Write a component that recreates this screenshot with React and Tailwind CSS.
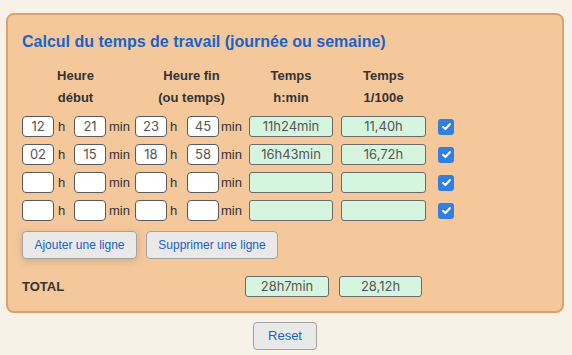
import React from "react";

const rows = [
  ["12", "21", "23", "45", "11h24min", "11,40h"],
  ["02", "15", "18", "58", "16h43min", "16,72h"],
  ["", "", "", "", "", ""],
  ["", "", "", "", "", ""],
];

const inputCls =
  "w-[32px] h-[21px] bg-white border border-[#5a5a5a] rounded-[4px] text-center text-[13px] text-[#555] leading-[19px] font-['Inter',sans-serif]";
const resCls =
  "h-[21px] bg-[#d6f5df] border border-[#6a6a6a] rounded-[3px] text-center text-[13px] text-[#555] leading-[19px] font-['Inter',sans-serif]";

function Check() {
  return (
    <div className="w-[16px] h-[16px] rounded-[3px] bg-[#2f7fe4] flex items-center justify-center">
      <svg width="11" height="11" viewBox="0 0 12 12">
        <path d="M2.2 6.3 L4.8 8.8 L9.8 3.3" stroke="white" strokeWidth="2.2" fill="none" strokeLinecap="round" strokeLinejoin="round" />
      </svg>
    </div>
  );
}

export default function App() {
  return (
    <div className="w-[572px] h-[355px] bg-[#f8f1e7] font-['Liberation_Sans',Arial,sans-serif] pt-[13px] pl-[6px]">
      <div className="w-[558px] h-[300px] bg-[#f5c89c] border-2 border-[#dba26d] rounded-[8px] pl-[14px] pt-[17px]">
        <div className="text-[16px] leading-[20px] font-bold text-[#1565c8]">
          Calcul du temps de travail (journée ou semaine)
        </div>
        <div className="flex mt-[13px] text-[13px] font-bold text-[#333] leading-[22px] text-center">
          <div className="w-[107px]">Heure<br />début</div>
          <div className="w-[113px] ml-[6px]">Heure fin<br />(ou temps)</div>
          <div className="w-[84px] ml-[1px]">Temps<br />h:min</div>
          <div className="w-[85px] ml-[8px]">Temps<br />1/100e</div>
        </div>
        <div className="flex flex-col gap-[7px] mt-[7px]">
          {rows.map((r, i) => (
            <div key={i} className="flex items-center text-[13px] text-[#333]">
              <div className={inputCls}>{r[0]}</div>
              <span className="w-[20px] pl-[4px]">h</span>
              <div className={inputCls}>{r[1]}</div>
              <span className="w-[29px] pl-[3px]">min</span>
              <div className={inputCls}>{r[2]}</div>
              <span className="w-[20px] pl-[3px]">h</span>
              <div className={inputCls}>{r[3]}</div>
              <span className="w-[30px] pl-[2px]">min</span>
              <div className={resCls + " w-[84px]"}>{r[4]}</div>
              <div className={resCls + " w-[85px] ml-[8px]"}>{r[5]}</div>
              <div className="ml-[12px]">
                <Check />
              </div>
            </div>
          ))}
        </div>
        <div className="flex gap-[9px] mt-[10px]">
          <button className="w-[115px] h-[28px] bg-[#e9e9ea] border border-[#a3a3a3] rounded-[4px] text-[12px] text-[#1a62c4] shadow-[0_2px_8px_rgba(0,0,0,0.15)]">
            Ajouter une ligne
          </button>
          <button className="w-[132px] h-[28px] bg-[#e9e9ea] border border-[#a3a3a3] rounded-[4px] text-[12px] text-[#1a62c4]">
            Supprimer une ligne
          </button>
        </div>
        <div className="flex items-center mt-[17px]">
          <div className="w-[223px] text-[13px] font-bold text-[#333]">TOTAL</div>
          <div className={resCls + " w-[84px] h-[20px] leading-[18px]"}>28h7min</div>
          <div className={resCls + " w-[83px] h-[20px] leading-[18px] ml-[10px]"}>28,12h</div>
        </div>
      </div>
      <div className="flex justify-center w-[558px] mt-[9px]">
        <button className="w-[64px] h-[28px] bg-[#e9e9ea] border border-[#a3a3a3] rounded-[4px] text-[13px] text-[#1a62c4]">
          Reset
        </button>
      </div>
    </div>
  );
}
